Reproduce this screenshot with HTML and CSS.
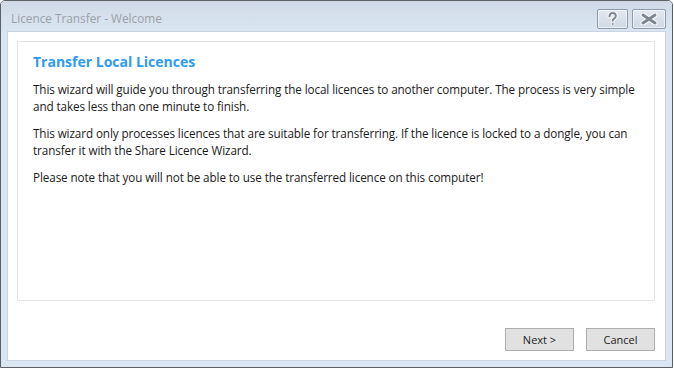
FILE: index.html
```html
<!DOCTYPE html>
<html lang="en">
<head>
  <meta charset="UTF-8" />
  <title>Licence Transfer - Welcome</title>
  <link rel="stylesheet" href="styles.css">
</head>
<body>
  <div class="window">
    <div class="titlebar">
      <div class="title">Licence Transfer - Welcome</div>
      <div class="caption-buttons">
        <div class="cap-btn help">
          <svg width="13" height="14" viewBox="0 0 13 14">
            <path d="M3.5 4.5 C3.5 2 5 1 6.5 1 C8.5 1 9.8 2.2 9.8 4 C9.8 5.6 8.6 6.3 7.6 7 C7 7.4 6.8 7.9 6.8 8.8" fill="none" stroke="#fff" stroke-width="4" stroke-linecap="round"/>
            <path d="M3.5 4.5 C3.5 2 5 1 6.5 1 C8.5 1 9.8 2.2 9.8 4 C9.8 5.6 8.6 6.3 7.6 7 C7 7.4 6.8 7.9 6.8 8.8" fill="none" stroke="#7d8794" stroke-width="2" stroke-linecap="round"/>
            <circle cx="6.8" cy="12" r="1.4" fill="#7d8794" stroke="#fff" stroke-width="0.8"/>
          </svg>
        </div>
        <div class="cap-btn close">
          <svg width="18" height="12" viewBox="0 0 18 12">
            <path d="M3 2 L15 10 M15 2 L3 10" stroke="#fff" stroke-width="5" stroke-linecap="round"/>
            <path d="M3 2 L15 10 M15 2 L3 10" stroke="#7d8794" stroke-width="3" stroke-linecap="round"/>
          </svg>
        </div>
      </div>
    </div>
    <div class="client">
      <div class="panel">
        <h1 class="heading">Transfer Local Licences</h1>
        <p>This wizard will guide you through transferring the local licences to another computer. The process is very simple and takes less than one minute to finish.</p>
        <p>This wizard only processes licences that are suitable for transferring. If the licence is locked to a dongle, you can transfer it with the Share Licence Wizard.</p>
        <p>Please note that you will not be able to use the transferred licence on this computer!</p>
      </div>
      <div class="actions">
        <button class="btn">Next &gt;</button>
        <button class="btn">Cancel</button>
      </div>
    </div>
  </div>
</body>
</html>
```

FILE: styles.css
```css
* {
  margin: 0;
  padding: 0;
  box-sizing: border-box;
}

body {
  font-family: 'Open Sans', 'Noto Sans', sans-serif;
  background: #ffffff;
  width: 674px;
  height: 369px;
  overflow: hidden;
}

.window {
  width: 673px;
  height: 368px;
  border: 1px solid #5b5f66;
  border-radius: 5px 5px 0 0;
  background: #dbe6f3;
  padding: 0 6px 6px 6px;
  display: flex;
  flex-direction: column;
}

.titlebar {
  height: 30px;
  display: flex;
  justify-content: space-between;
  align-items: flex-start;
  background: linear-gradient(#cfdae6, #dbe6f3);
  margin: 0 -6px;
  padding: 0 6px 0 10px;
  border-radius: 4px 4px 0 0;
}

.title {
  font-size: 11.8px;
  color: #9aa0a7;
  padding-top: 9px;
}

.caption-buttons {
  display: flex;
  gap: 4px;
  padding-top: 8px;
}

.cap-btn {
  height: 20px;
  border: 1px solid #8d9aab;
  border-radius: 2px;
  background: linear-gradient(#e2e9f1, #cfd9e4);
  box-shadow: inset 0 0 0 1px rgba(255, 255, 255, 0.6);
  display: flex;
  align-items: center;
  justify-content: center;
}

.help {
  width: 31px;
}

.close {
  width: 34px;
}

.client {
  flex: 1;
  background: #ffffff;
  border: 1px solid #c9d4e0;
  display: flex;
  flex-direction: column;
  padding: 9px 10px 0 9px;
}

.panel {
  height: 260px;
  border: 1px solid #e3e3e3;
  padding: 10px 15px;
}

.heading {
  font-size: 14px;
  font-weight: bold;
  color: #2d9bf0;
  margin-bottom: 10px;
}

.panel p {
  font-size: 11.7px;
  line-height: 17px;
  color: #1a1a1a;
  margin-bottom: 10px;
  letter-spacing: -0.1px;
}

.actions {
  display: flex;
  justify-content: flex-end;
  gap: 12px;
  padding-top: 27px;
}

.btn {
  width: 69px;
  height: 23px;
  font-family: 'Open Sans', 'Noto Sans', sans-serif;
  font-size: 11px;
  color: #222;
  background: #e1e1e1;
  border: 1px solid #adadad;
}
```
